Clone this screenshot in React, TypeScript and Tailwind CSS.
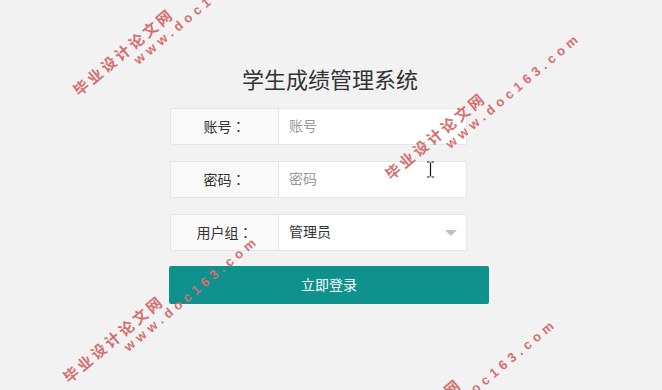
import React from 'react';

const Watermark: React.FC<{ left: number; top: number }> = ({ left, top }) => (
    <div
        className="absolute pointer-events-none origin-top-left -rotate-[40deg] text-[#d27070] font-bold leading-none whitespace-nowrap"
        style={{ left, top }}
    >
        <div className="text-[15px] tracking-[3px] font-['Noto_Sans_CJK_SC',sans-serif]">毕业设计论文网</div>
        <div className="ml-[66px] mt-[2px] text-[13px] tracking-[4.5px] font-['Liberation_Sans',sans-serif]">www.doc163.com</div>
    </div>
);

const App: React.FC = () => {
    return (
        <div className="relative w-full h-[390px] overflow-hidden bg-[#f2f2f2] font-['Liberation_Sans','Noto_Sans_CJK_SC',sans-serif]">
            <div className="flex flex-col items-center pt-[64px]">
                {/* Title */}
                <h1 className="text-[22px] leading-[33px] text-[#333] ml-[-2px]">学生成绩管理系统</h1>

                {/* Form */}
                <div className="w-[322px] mt-[11px] flex flex-col">
                    <div className="w-[297px] h-[37px] flex bg-white border border-[#e6e6e6]">
                        <div className="w-[108px] flex items-center justify-center bg-[#f9f9f9] border-r border-[#e6e6e6] text-[14px] text-[#333] font-['Noto_Sans_CJK_JP',sans-serif]">账号：</div>
                        <div className="flex-1 flex items-center pl-[10px] text-[14px] text-[#999]">账号</div>
                    </div>

                    <div className="w-[297px] h-[37px] mt-[16px] flex bg-white border border-[#e6e6e6]">
                        <div className="w-[108px] flex items-center justify-center bg-[#f9f9f9] border-r border-[#e6e6e6] text-[14px] text-[#333] font-['Noto_Sans_CJK_JP',sans-serif]">密码：</div>
                        <div className="flex-1 flex items-center pl-[10px] text-[14px] text-[#999]">密码</div>
                    </div>

                    <div className="w-[297px] h-[37px] mt-[16px] flex bg-white border border-[#e6e6e6]">
                        <div className="w-[108px] flex items-center justify-center bg-[#f9f9f9] border-r border-[#e6e6e6] text-[14px] text-[#333] font-['Noto_Sans_CJK_JP',sans-serif]">用户组：</div>
                        <div className="flex-1 flex items-center justify-between pl-[10px] pr-[9px] text-[14px] text-[#333]">
                            <span>管理员</span>
                            <span className="w-0 h-0 border-t-[6px] border-t-[#c2c2c2] border-x-[6px] border-x-transparent"></span>
                        </div>
                    </div>

                    <button className="w-[320px] h-[38px] mt-[15px] -ml-[1px] rounded-[2px] bg-[#0f918d] text-white text-[14px]">
                        立即登录
                    </button>
                </div>
            </div>

            {/* text cursor */}
            <svg className="absolute left-[426px] top-[161px]" width="9" height="17" viewBox="0 0 9 17">
                <path d="M1 1h2.5M5.5 1H8M4.5 1.5v14M1 16h2.5M5.5 16H8" stroke="#111" strokeWidth="1.2" fill="none" />
            </svg>

            {/* watermarks */}
            <Watermark left={70} top={86} />
            <Watermark left={382} top={170} />
            <Watermark left={60} top={373} />
            <Watermark left={358} top={456} />
        </div>
    );
};

export default App;
